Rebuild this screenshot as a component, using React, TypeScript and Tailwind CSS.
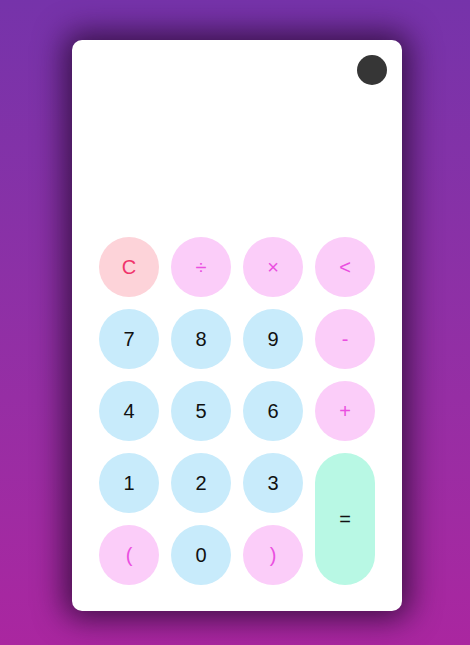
const keys: { label: string; kind: 'clear' | 'op' | 'num' }[] = [
  { label: 'C', kind: 'clear' },
  { label: '÷', kind: 'op' },
  { label: '×', kind: 'op' },
  { label: '<', kind: 'op' },
  { label: '7', kind: 'num' },
  { label: '8', kind: 'num' },
  { label: '9', kind: 'num' },
  { label: '-', kind: 'op' },
  { label: '4', kind: 'num' },
  { label: '5', kind: 'num' },
  { label: '6', kind: 'num' },
  { label: '+', kind: 'op' },
  { label: '1', kind: 'num' },
  { label: '2', kind: 'num' },
  { label: '3', kind: 'num' },
];

const styles = {
  clear: 'bg-[#fdd3d9] text-[#f0336b]',
  op: 'bg-[#fbcdf9] text-[#ea4fe0]',
  num: 'bg-[#c8ebfb] text-[#111111]',
};

function Key({ label, kind }: { label: string; kind: 'clear' | 'op' | 'num' }) {
  return (
    <button
      className={`w-[60px] h-[60px] rounded-full flex items-center justify-center text-[20px] ${styles[kind]}`}
    >
      {label}
    </button>
  );
}

export default function App() {
  return (
    <div
      className="w-full h-[645px] bg-gradient-to-b from-[#7633aa] to-[#aa26a0] flex justify-center pt-[40px] pl-[4px]"
      style={{ fontFamily: '"Liberation Sans", Arial, sans-serif' }}
    >
      <div className="w-[330px] h-[571px] bg-white rounded-[10px] shadow-[0_0_30px_8px_rgba(40,10,50,0.8)] flex flex-col px-[27px] pb-[26px]">
        <div className="flex justify-end pt-[15px] -mr-[12px]">
          <div className="w-[30px] h-[30px] rounded-full bg-[#363636]" />
        </div>
        <div className="flex-1" />
        <div className="grid grid-cols-[60px_60px_60px_60px] gap-[12px]">
          {keys.map((k) => (
            <Key key={k.label} label={k.label} kind={k.kind} />
          ))}
          <button className="row-span-2 col-start-4 row-start-4 w-[60px] rounded-full bg-[#b8f8e4] text-[#111111] text-[20px] flex items-center justify-center">
            =
          </button>
          <Key label="(" kind="op" />
          <Key label="0" kind="num" />
          <Key label=")" kind="op" />
        </div>
      </div>
    </div>
  );
}
